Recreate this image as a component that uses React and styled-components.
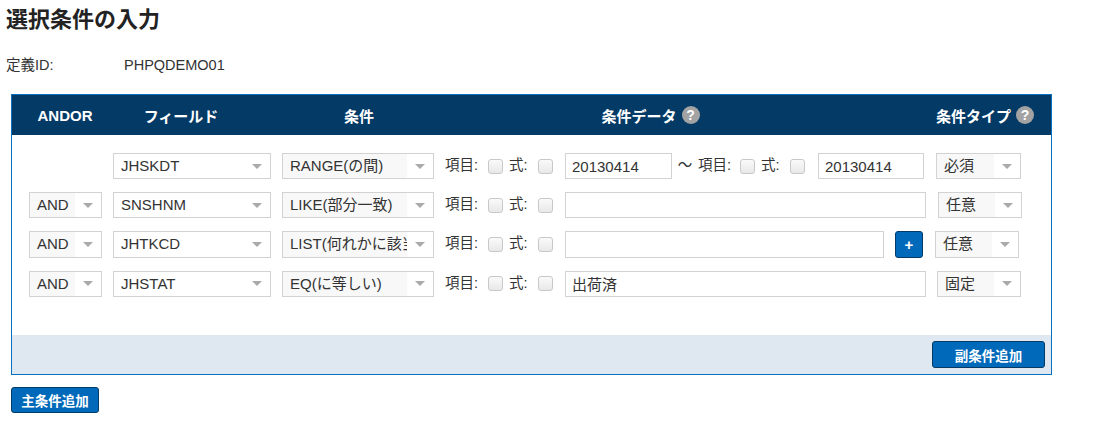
import React from "react"
import styled, { createGlobalStyle } from "styled-components"

const GlobalStyle = createGlobalStyle`
    body {
        margin: 0;
        background: #fff;
        color: #333;
        font-family: "Liberation Sans", "Noto Sans CJK JP", sans-serif;
        font-size: 15px;
    }
`

const Page = styled.div`
    width: 1104px;
    height: 430px;
    overflow: hidden;
`

const Title = styled.h1`
    margin: 0;
    padding: 8px 0 0 6px;
    height: 53px;
    box-sizing: border-box;
    font-size: 22px;
    line-height: 24px;
    font-weight: bold;
    color: #222;
`

const DefinitionRow = styled.div`
    display: flex;
    padding-left: 6px;
    height: 34px;
    padding-top: 3px;
    box-sizing: border-box;
    line-height: 18px;
    font-size: 14.5px;
`

const DefinitionLabel = styled.div`
    width: 118px;
`

const Panel = styled.div`
    margin: 7px 0 0 11px;
    width: 1041px;
    height: 281px;
    box-sizing: border-box;
    border: 1px solid #0a70bf;
    display: flex;
    flex-direction: column;
`

const Header = styled.div`
    height: 40px;
    background: #033a66;
    display: grid;
    grid-template-columns: 106px 126px 230px 353px 1fr;
    align-items: center;
    color: #fff;
    font-weight: bold;
    font-size: 15px;
`

const HeaderCell = styled.div`
    display: flex;
    align-items: center;
    justify-content: ${props => (props.$end ? "flex-end" : "center")};
    gap: 5px;
    padding-right: ${props => (props.$end ? "17px" : "0")};
`

const Help = styled.span`
    width: 18px;
    height: 18px;
    border-radius: 50%;
    background: #a3a3a3;
    color: #fff;
    font-size: 14px;
    line-height: 18px;
    text-align: center;
    font-weight: bold;
`

const Body = styled.div`
    flex: 1;
    padding: 17.9px 0 0 17px;
    display: flex;
    flex-direction: column;
    gap: 13px;
`

const Row = styled.div`
    display: flex;
    align-items: center;
    height: 26.25px;
`

const SelectBox = styled.div`
    flex: none;
    display: flex;
    width: ${props => props.$width}px;
    height: 100%;
    margin-right: ${props => props.$after ?? 11}px;
    margin-left: ${props => props.$before ?? 0}px;
    box-sizing: border-box;
    border: 1px solid #d2d2d2;
    background: #fff;
`

const SelectText = styled.div`
    flex: 1;
    min-width: 0;
    padding-left: 7px;
    line-height: 24px;
    white-space: nowrap;
    overflow: hidden;
    background: ${props => (props.$shaded ? "#f8f8f8" : "#fff")};
`

const SelectArrow = styled.div`
    flex: none;
    width: 26px;
    display: flex;
    align-items: center;
    justify-content: center;

    &::after {
        content: "";
        border-left: 5px solid transparent;
        border-right: 5px solid transparent;
        border-top: 5px solid #aaa;
    }
`

const Spacer = styled.div`
    flex: none;
    width: ${props => props.$width}px;
`

const Label = styled.span`
    flex: none;
    align-self: flex-start;
    width: ${props => props.$width}px;
    font-size: 14.5px;
    line-height: 24px;
    white-space: nowrap;
    text-align: ${props => props.$align ?? "left"};
`

const Check = styled.span`
    flex: none;
    width: 15px;
    height: 15px;
    box-sizing: border-box;
    margin-right: ${props => props.$after}px;
    border: 1px solid #c8c8c8;
    border-radius: 3px;
    background: linear-gradient(#fafafa, #e8e8e8);
`

const TextInput = styled.input`
    flex: none;
    width: ${props => props.$width}px;
    height: 100%;
    box-sizing: border-box;
    margin: 0;
    padding: 0 6px;
    border: 1px solid #d2d2d2;
    outline: none;
    color: #333;
    font-family: inherit;
    font-size: 15px;
    border-radius: 0;
`

const Button = styled.button`
    flex: none;
    box-sizing: border-box;
    width: ${props => props.$width}px;
    height: ${props => props.$height ?? 27}px;
    padding: 0;
    border: 1px solid #033a66;
    border-radius: 3px;
    background: #0069ba;
    color: #fff;
    font-family: inherit;
    font-size: 13.5px;
    font-weight: bold;
`

const PlusButton = styled(Button)`
    margin: 0 12px 0 11px;
    font-size: 15px;
`

const Footer = styled.div`
    height: 39px;
    background: #dfe8f1;
    display: flex;
    align-items: center;
    justify-content: flex-end;
    padding-right: 6px;
`

const MainAdd = styled.div`
    margin: 12px 0 0 11px;
`

const Select = ({ width, shaded, before, after, children }) => (
    <SelectBox $width={width} $before={before} $after={after}>
        <SelectText $shaded={shaded}>{children}</SelectText>
        <SelectArrow />
    </SelectBox>
)

const Flags = () => (
    <>
        <Label $width={43}>項目:</Label>
        <Check $after={6} />
        <Label $width={29}>式:</Label>
        <Check $after={12} />
    </>
)

const rows = [
    { andor: false, field: "JHSKDT", cond: "RANGE(の間)" },
    { andor: true, field: "SNSHNM", cond: "LIKE(部分一致)" },
    { andor: true, field: "JHTKCD", cond: "LIST(何れかに該当)" },
    { andor: true, field: "JHSTAT", cond: "EQ(に等しい)" },
]

const Lead = ({ row }) => (
    <>
        {row.andor ? <Select width={73} shaded>AND</Select> : <Spacer $width={84} />}
        <Select width={158}>{row.field}</Select>
        <Select width={152} shaded>{row.cond}</Select>
        <Flags />
    </>
)

const App = () => (
    <Page>
        <GlobalStyle />
        <Title>選択条件の入力</Title>
        <DefinitionRow>
            <DefinitionLabel>定義ID:</DefinitionLabel>
            <div>PHPQDEMO01</div>
        </DefinitionRow>
        <Panel>
            <Header>
                <HeaderCell>ANDOR</HeaderCell>
                <HeaderCell>フィールド</HeaderCell>
                <HeaderCell>条件</HeaderCell>
                <HeaderCell>条件データ<Help>?</Help></HeaderCell>
                <HeaderCell $end>条件タイプ<Help>?</Help></HeaderCell>
            </Header>
            <Body>
                <Row>
                    <Lead row={rows[0]} />
                    <TextInput $width={107} defaultValue="20130414" />
                    <Label $width={26} $align="center">〜</Label>
                    <Label $width={42}>項目:</Label>
                    <Check $after={6} />
                    <Label $width={29}>式:</Label>
                    <Check $after={13} />
                    <TextInput $width={106} defaultValue="20130414" />
                    <Select width={85} shaded before={12}>必須</Select>
                </Row>
                <Row>
                    <Lead row={rows[1]} />
                    <TextInput $width={361} />
                    <Select width={84} shaded before={12}>任意</Select>
                </Row>
                <Row>
                    <Lead row={rows[2]} />
                    <TextInput $width={319} />
                    <PlusButton $width={28}>+</PlusButton>
                    <Select width={84} shaded>任意</Select>
                </Row>
                <Row>
                    <Lead row={rows[3]} />
                    <TextInput $width={361} defaultValue="出荷済" />
                    <Select width={84} shaded before={11}>固定</Select>
                </Row>
            </Body>
            <Footer>
                <Button $width={113}>副条件追加</Button>
            </Footer>
        </Panel>
        <MainAdd>
            <Button $width={88} $height={26}>主条件追加</Button>
        </MainAdd>
    </Page>
)

export default App
